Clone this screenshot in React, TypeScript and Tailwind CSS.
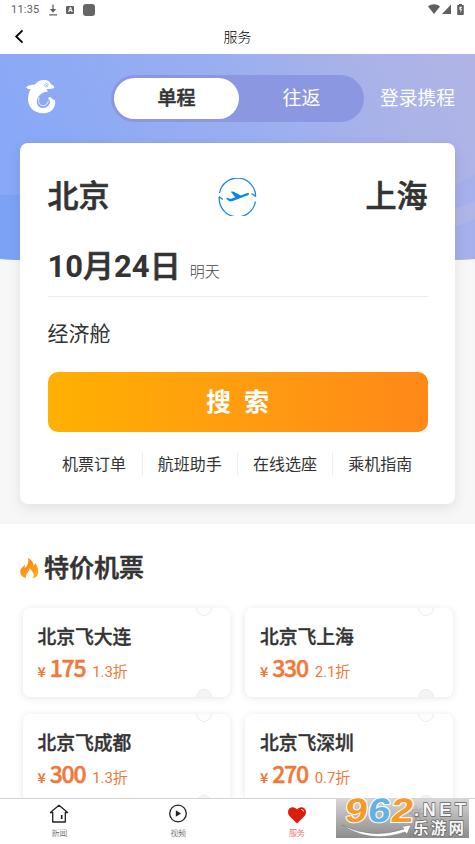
const TRIP_LINKS = ["机票订单", "航班助手", "在线选座", "乘机指南"];

const DEALS = [
  { route: "北京飞大连", price: "175", discount: "1.3折" },
  { route: "北京飞上海", price: "330", discount: "2.1折" },
  { route: "北京飞成都", price: "300", discount: "1.3折" },
  { route: "北京飞深圳", price: "270", discount: "0.7折" },
];

function StatusBar() {
  return (
    <div className="flex h-5 items-center pl-[11px] pr-[11px] text-[#606060]">
      <span className="font-['Roboto'] text-[11px] leading-5 tracking-[0.2px]">11:35</span>
      <svg className="ml-[9px] h-3 w-[10px]" viewBox="0 0 10 12" fill="none" stroke="currentColor" strokeWidth="1.3">
        <path d="M5 .5v6.500M1.200 10.800h7.800" />
        <path d="M1.800 5h6.400L5 8.700z" fill="currentColor" stroke="none" />
      </svg>
      <span className="ml-[8px] flex h-2 w-2 items-center justify-center rounded-[1px] bg-[#606060] font-['Roboto'] text-[7px] font-bold leading-none text-white">
        A
      </span>
      <span className="ml-[9px] h-3 w-3 rounded-[3px] bg-[#666]" />
      <div className="ml-auto flex items-center pb-[2px]">
        <svg className="h-[10px] w-3" viewBox="0 0 12 10" fill="currentColor">
          <path d="M0 2.400C3.400-.6 8.600-.6 12 2.400L6 10z" />
        </svg>
        <svg className="ml-[2px] h-[10px] w-[9px]" viewBox="0 0 9 10" fill="currentColor">
          <path d="M9 .5V10H0z" />
        </svg>
        <svg className="ml-[6px] h-[11px] w-[7px]" viewBox="0 0 7 11" fill="currentColor">
          <path d="M2 0h3v1h1.200q.6 0 .6.700v8.600q0 .700-.6.700H.8q-.6 0-.6-.700V1.700Q.2 1 .8 1H2z" />
          <path d="M4.800 2.800H2.500v3h1V9l1.500-3.800H3.800v-1h1z" fill="#fff" />
        </svg>
      </div>
    </div>
  );
}

function TitleBar() {
  return (
    <header className="grid h-[34px] grid-cols-[1fr_auto_1fr] items-center pl-[14px] pr-[14px] pb-[2px]">
      <svg className="h-[15px] w-[10px]" viewBox="0 0 10 15" fill="none" stroke="#000" strokeWidth="1.8">
        <path d="M8.500 1.300 2.200 7.500l6.300 6.200" />
      </svg>
      <h1 className="text-[14px] font-light leading-none text-black">服务</h1>
    </header>
  );
}

function HeroBackdrop() {
  return (
    <svg className="absolute left-0 top-0 h-[212px] w-full" viewBox="0 0 475 212">
      <defs>
        <linearGradient id="sky" x1="0" y1="0.2" x2="1" y2="0">
          <stop offset="0" stopColor="#89a8f7" />
          <stop offset="0.5" stopColor="#9bafef" />
          <stop offset="0.8" stopColor="#abb3e8" />
          <stop offset="1" stopColor="#b0b4e5" />
        </linearGradient>
        <linearGradient id="wave" x1="0" y1="0" x2="1" y2="0">
          <stop offset="0" stopColor="#7ba2f6" />
          <stop offset="1" stopColor="#a3aeed" />
        </linearGradient>
        <clipPath id="arc">
          <path d="M0 0H475V205Q237 219 0 205Z" />
        </clipPath>
      </defs>
      <g clipPath="url(#arc)">
        <path d="M0 0H475V212H0z" fill="url(#sky)" />
        <path d="M0 141Q120 136 240 212H0z" fill="url(#wave)" />
        <path d="M475 121Q440 140 380 155V212H475z" fill="#a5b0ec" />
        <path d="M475 148Q450 157 400 168V185Q445 178 475 165z" fill="#b0b5e7" />
      </g>
    </svg>
  );
}

function DolphinLogo() {
  return (
    <svg className="-mt-[4px] h-[34px] w-[30px]" viewBox="0 0 30 34" fill="#fff">
      <path d="M0 7.500C2 5 5 4.300 8.500 4.800 11 1.500 14 .2 18 0 21.500 0 24 1.500 24.800 4L28 6.300Q28.800 8.200 27 8.600L20.500 9.300 22 11.800Q18 11.500 15.500 13.500C12.200 16.300 10.500 19 10.800 22.500 11.300 26.300 14 28.300 17.500 28 21.500 27.700 24.300 24.500 24 21.300L22 18.300 24 16.800 25.800 18.500 29.200 20.500C29.800 28 25 33.300 17.500 33.300 7.500 33.300 1.800 26.500 2 18.500 2.100 15 3 12 4.800 9.300 3 9.300 1.300 8.800 0 7.500z" />
      <path d="M13 17.500C11.800 21.500 13.200 25.700 16.800 25.700 19.500 25.700 21.800 24 22.300 21" fill="none" stroke="#fff" strokeWidth="0.800" />
      <circle cx="20.300" cy="5.300" r="1.700" fill="none" stroke="#8ca9f5" strokeWidth="0.700" />
      <circle cx="20.600" cy="5.300" r="0.600" fill="#8ca9f5" />
    </svg>
  );
}

function TripSwitch() {
  return (
    <div className="ml-[55px] flex h-[47px] w-[253px] rounded-full bg-[#8b98e1] p-[3px] text-[19px] leading-[38px] text-white">
      <span className="h-[41px] w-[125px] rounded-full bg-white text-center font-medium text-[#333] [-webkit-text-stroke:0.5px]">
        单程
      </span>
      <span className="flex-1 pl-[3px] text-center">往返</span>
    </div>
  );
}

function PlaneIcon() {
  return (
    <svg className="mt-[3px] h-[38px] w-[39px]" viewBox="0 0 39 38" fill="none" stroke="#1686e6" strokeWidth="1.300">
      <path d="M1.500 15A18.200 18.200 0 0 1 37.600 18.500" />
      <path d="M37.400 23.500A18.200 18.200 0 0 1 1.300 19" />
      <path d="M33.600 15.500l4 3M1.200 18.500l3.500 3" />
      <path
        d="M8 20.500l1.800-.8 2.500 1.400 5-1.800-4.500-5.500 2.500-.4 7.500 4 5.800-2.100q2.700-.7 2.500.7-.2 1-2 1.600L14 23.200q-2 .5-3.300-.5z"
        fill="#0c84ee"
        stroke="none"
      />
    </svg>
  );
}

function SearchCard() {
  return (
    <section className="mx-5 mt-[21px] h-[361px] rounded-lg bg-white px-[27.5px] pt-[31px] shadow-[0_4px_14px_rgba(0,0,0,0.09)]">
      <div className="grid h-[42px] grid-cols-[1fr_auto_1fr] items-center text-[31px] font-medium leading-[42px] text-[#333]">
        <span className="-mt-[2px] [-webkit-text-stroke:0.7px]">北京</span>
        <PlaneIcon />
        <span className="-mt-[2px] text-right [-webkit-text-stroke:0.7px]">上海</span>
      </div>
      <div className="mt-[21px] flex h-[60px] items-baseline border-b border-[#ebebeb] text-[#333]">
        <span className="font-['Roboto','Noto_Sans_CJK_SC',sans-serif] text-[31px] font-bold leading-[60px]">
          10<span className="font-medium [-webkit-text-stroke:0.7px]">月</span>24
          <span className="font-medium [-webkit-text-stroke:0.7px]">日</span>
        </span>
        <span className="ml-[9px] text-[15px] font-light text-[#444]">明天</span>
      </div>
      <p className="mt-[17px] text-[21px] leading-[36px] text-[#333]">经济舱</p>
      <button className="mt-[22px] h-[60px] w-full rounded-[10px] bg-linear-to-r from-[#ffb000] to-[#ff8818] pb-[4px] text-[25px] font-bold leading-none text-white">
        搜<span className="ml-[13px]">索</span>
      </button>
      <nav className="-ml-px mt-[20px] grid h-6 grid-cols-4 text-center text-[16px] leading-[23px] text-[#333]">
        {TRIP_LINKS.map((label, i) => (
          <span key={label} className={i ? "border-l border-[#eee]" : ""}>
            {label}
          </span>
        ))}
      </nav>
    </section>
  );
}

function FlameIcon() {
  return (
    <svg className="mt-[3px] h-[22px] w-[19px]" viewBox="0 0 19 22">
      <defs>
        <linearGradient id="flame" x1="0" y1="0" x2="0.500" y2="1">
          <stop offset="0" stopColor="#ff7d00" />
          <stop offset="1" stopColor="#ffa51e" />
        </linearGradient>
      </defs>
      <path
        d="M8 .8C12 3 13.600 6 13.500 9L15.200 6.300C17.500 9 19.500 14.500 17.500 18 16.600 20 15 20.800 12.700 21 15 17.500 13 14.500 9.500 11.500 9.500 15 5 16.500 6.200 21 3 20.600.8 18.500.3 15.500-.2 11.500 3 10.800 4.600 7.600 4.800 9 4.800 10 4.800 11 8 8.500 9 5 8 .8z"
        fill="url(#flame)"
      />
    </svg>
  );
}

function DealCard({ route, price, discount }: (typeof DEALS)[number]) {
  return (
    <article className="relative h-[89px] overflow-hidden rounded-[7px] bg-white pl-[15px] pt-[15px] shadow-[0_1px_7px_rgba(0,0,0,0.1)]">
      <h3 className="text-[18.8px] font-medium leading-[26px] text-[#333] [-webkit-text-stroke:0.4px]">{route}</h3>
      <p className="mt-[2px] flex h-[32px] items-baseline text-[#ef7938]">
        <span className="text-[14px] font-bold leading-[32px]">¥</span>
        <span className="ml-[4px] text-[23px] font-medium leading-[32px] tracking-[-1.300px] [-webkit-text-stroke:0.5px]">{price}</span>
        <span className="ml-[7px] font-['Roboto','Noto_Sans_CJK_SC',sans-serif] text-[15px] leading-[32px] tracking-[-0.100px]">
          {discount}
        </span>
      </p>
      {/* ticket notches */}
      <i className="absolute left-[173px] top-[-8px] h-4 w-4 rounded-full border border-[#ececec] bg-[#fdfdfd]" />
      <i className="absolute bottom-[-8px] left-[173px] h-4 w-4 rounded-full border border-[#ebebeb] bg-[#f4f4f4]" />
    </article>
  );
}

function Deals() {
  return (
    <section className="mt-5 flex-1 bg-white pt-[25px]">
      <h2 className="flex h-[34px] items-center pl-[20px] text-[25px] font-medium leading-[34px] text-[#333]">
        <FlameIcon />
        <span className="ml-[5px] [-webkit-text-stroke:0.6px]">特价机票</span>
      </h2>
      <div className="mt-[25px] grid grid-cols-2 gap-x-[15px] gap-y-[17px] px-[22.5px]">
        {DEALS.map((deal) => (
          <DealCard key={deal.route} {...deal} />
        ))}
      </div>
    </section>
  );
}

const TABS = [
  {
    label: "新闻",
    icon: (
      <g fill="none" stroke="#222" strokeWidth="1.300">
        <path d="M3.700 8.500v9.500h12.600V8.500h2.300L10 1.300 1.400 8.500z" strokeLinejoin="round" />
        <path d="M12.700 11v4" strokeWidth="1.700" />
      </g>
    ),
  },
  {
    label: "视频",
    icon: (
      <g>
        <circle cx="10" cy="9.500" r="8.300" fill="none" stroke="#222" strokeWidth="1.300" />
        <path d="M7.800 6.300v6.400l5.200-3.200z" fill="#222" />
      </g>
    ),
  },
  {
    label: "服务",
    icon: (
      <g>
        <path d="M10 19.500 2.500 12C-.5 8.500 1.500 3.300 5.500 3.300 7.700 3.300 9.200 4.300 10 5.600 10.800 4.300 12.300 3.300 14.500 3.300 18.500 3.300 20.500 8.500 17.500 12z" fill="#df1b0b" />
        <path d="M14.200 5.400q2 .2 2.400 2" fill="none" stroke="#fff" strokeWidth="1" />
      </g>
    ),
  },
  {
    label: "我的",
    icon: (
      <g fill="none" stroke="#333" strokeWidth="1.300">
        <circle cx="10" cy="9.500" r="4" />
        <path d="M10 2v3M10 14v3M3 9.500h3M14 9.500h3M5 4.500l2 2M13 12.500l2 2M15 4.500l-2 2M7 12.500l-2 2" />
      </g>
    ),
  },
];

function TabBar() {
  return (
    <nav className="relative grid h-[46px] grid-cols-4 border-t border-[#d2d2d2] bg-white">
      {TABS.map(({ label, icon }) => (
        <a
          key={label}
          className={
            label === "服务"
              ? "flex flex-col items-center pt-[5px] text-[#df2418]"
              : "flex flex-col items-center pt-[5px] text-[#333]"
          }
        >
          <svg className="h-5 w-5" viewBox="0 0 20 20">
            {icon}
          </svg>
          <span className="mt-[4px] text-[8px] font-light leading-[10px]">{label}</span>
        </a>
      ))}
      <Watermark />
    </nav>
  );
}

function Watermark() {
  return (
    <div className="absolute right-[6px] top-[-1px] h-10 w-[133px] bg-linear-to-b from-[#d5d5d5]/90 to-[#808080]/90">
      <svg className="h-10 w-[133px] overflow-visible" viewBox="0 0 133 40">
        <path d="M6 27Q36 42 68 31L66 28.500 75 27 71 36 69 34Q34 46 6 27z" fill="#fff" stroke="#777" strokeWidth="0.500" />
        <g
          transform="translate(8 23.500) skewX(-7)"
          fontFamily="Liberation Sans"
          fontSize="34"
          fontWeight="bold"
          stroke="#fff"
          strokeWidth="2"
          paintOrder="stroke"
          strokeLinejoin="round"
        >
          <text x="0" textLength="22.500" lengthAdjust="spacingAndGlyphs" fill="#f79a2a">9</text>
          <text x="23" textLength="22.500" lengthAdjust="spacingAndGlyphs" fill="#62b3e3">6</text>
          <text x="46" textLength="22.500" lengthAdjust="spacingAndGlyphs" fill="#f79a2a">2</text>
        </g>
        <g fill="#f6f6f6" stroke="#666" strokeWidth="1.400" paintOrder="stroke" fontWeight="bold">
          <text x="78" y="18" fontFamily="Liberation Sans" fontSize="18" textLength="52">.NET</text>
          <text x="77" y="36" fontFamily="Noto Sans CJK SC" fontSize="15.500" textLength="51">乐游网</text>
        </g>
      </svg>
    </div>
  );
}

export default function App() {
  return (
    <div className="flex h-[844px] w-full flex-col overflow-hidden bg-white font-['Noto_Sans_CJK_SC',sans-serif]">
      <StatusBar />
      <TitleBar />
      <main className="relative flex min-h-0 flex-1 flex-col overflow-hidden bg-[#f7f7f7]">
        <HeroBackdrop />
        <div className="relative flex flex-1 flex-col">
          <div className="mt-[21px] flex h-[47px] items-center pl-[26px]">
            <DolphinLogo />
            <TripSwitch />
            <a className="-mt-[3px] ml-[16px] whitespace-nowrap text-[18.800px] leading-none text-white">登录携程</a>
          </div>
          <SearchCard />
          <Deals />
        </div>
      </main>
      <TabBar />
    </div>
  );
}
